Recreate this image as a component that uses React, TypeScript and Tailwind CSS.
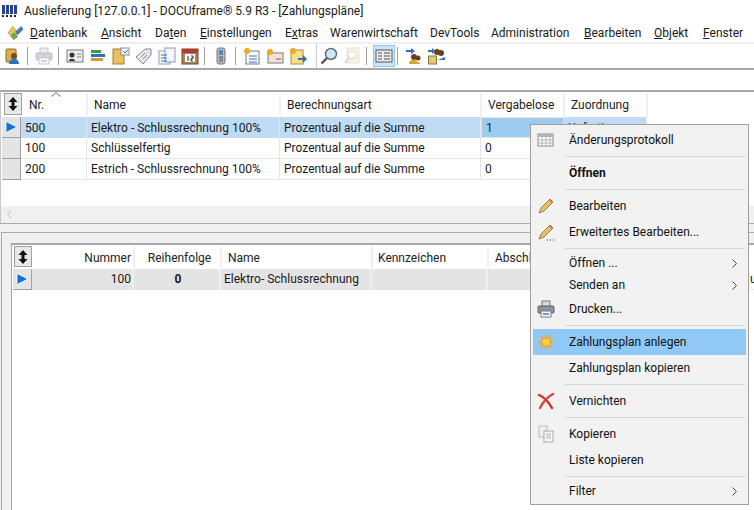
import type { ReactNode } from "react";

const font = { fontFamily: 'Roboto, "Noto Sans", sans-serif' };

function Sep() {
  return <span className="ml-[5px] mr-[7px] h-[18px] w-px shrink-0 bg-[#a0a0a0]" />;
}

function Glyph({ children, className = "" }: { children: ReactNode; className?: string }) {
  return (
    <svg viewBox="0 0 18 18" className={`h-[18px] w-[18px] shrink-0 ${className}`}>
      {children}
    </svg>
  );
}

function UsersFolder() {
  return (
    <Glyph>
      <rect x="2" y="2" width="10" height="13" rx="1" fill="#d9b04a" stroke="#8a6a20" />
      <circle cx="10" cy="9" r="3" fill="#7a4a28" />
      <path d="M5 17c0-4 3-5 5-5s5 1 5 5z" fill="#2f6fc4" />
    </Glyph>
  );
}

function Printer({ faded }: { faded?: boolean }) {
  return (
    <Glyph className={faded ? "opacity-40" : ""}>
      <rect x="5" y="1" width="8" height="6" fill="#d8d8d8" stroke="#777" />
      <rect x="1" y="6" width="16" height="7" rx="1" fill="#8d949b" stroke="#5d646b" />
      <rect x="4" y="11" width="10" height="6" fill="#fff" stroke="#777" />
      <rect x="6" y="13" width="6" height="2" fill="#5aa0dc" />
    </Glyph>
  );
}

function Arrow() {
  return (
    <svg viewBox="0 0 14 14" className="h-[14px] w-[14px]">
      <path d="M2 1.5 L13 7 L2 12.5 Z" fill="#0f74d8" stroke="#fff" strokeWidth="0.8" />
    </svg>
  );
}

function SortIcon() {
  return (
    <svg viewBox="0 0 12 16" className="h-[16px] w-[12px]">
      <path d="M6 1 L10.5 6 H7.5 V10 H10.5 L6 15 L1.5 10 H4.5 V6 H1.5 Z" fill="#111" />
    </svg>
  );
}

function Chevron({ className = "" }: { className?: string }) {
  return (
    <svg viewBox="0 0 5 9" className={`h-[9px] w-[5px] ${className}`}>
      <path d="M0.5 0.5 L4.5 4.5 L0.5 8.5" fill="none" stroke="#444" />
    </svg>
  );
}

function Head({ w, children, className = "px-[6px]" }: { w: string; children?: ReactNode; className?: string }) {
  return (
    <div className={`${w} flex h-full shrink-0 items-center border-r-2 border-[#f0f0f0] ${className}`}>
      {children}
    </div>
  );
}

function Cell({ w, children, className = "" }: { w: string; children?: ReactNode; className?: string }) {
  return (
    <div className={`${w} flex h-full shrink-0 items-center overflow-hidden whitespace-nowrap border-r border-[#e4e4e4] pl-[4px] ${className}`}>
      {children}
    </div>
  );
}

function Selector({ active }: { active?: boolean }) {
  return (
    <div className="flex h-full w-[19px] shrink-0 items-center justify-center border-b border-r border-[#a0a0a0] bg-[#e4e4e4]">
      {active && <Arrow />}
    </div>
  );
}

const rows = [
  { nr: "500", name: "Elektro - Schlussrechnung 100%", art: "Prozentual auf die Summe", verg: "1", active: true },
  { nr: "100", name: "Schlüsselfertig", art: "Prozentual auf die Summe", verg: "0" },
  { nr: "200", name: "Estrich - Schlussrechnung 100%", art: "Prozentual auf die Summe", verg: "0" },
];

const menus = [
  { pre: "", key: "D", post: "atenbank", w: "w-[71px]" },
  { pre: "", key: "A", post: "nsicht", w: "w-[54px]" },
  { pre: "Da", key: "t", post: "en", w: "w-[45px]" },
  { pre: "", key: "E", post: "instellungen", w: "w-[85px]" },
  { pre: "E", key: "x", post: "tras", w: "w-[45px]" },
  { pre: "Warenwirtschaft", key: "", post: "", w: "w-[100px]" },
  { pre: "DevTools", key: "", post: "", w: "w-[61px]" },
  { pre: "Administration", key: "", post: "", w: "w-[93px]" },
  { pre: "", key: "B", post: "earbeiten", w: "w-[70px]" },
  { pre: "", key: "O", post: "bjekt", w: "w-[49px]" },
  { pre: "", key: "F", post: "enster", w: "w-[45px]" },
];

function MenuItem({ icon, label, bold, sub, hover, short }: { icon?: ReactNode; label: string; bold?: boolean; sub?: boolean; hover?: boolean; short?: boolean }) {
  return (
    <div className={`flex items-center ${short ? "h-[22px]" : "h-[26px]"} ${hover ? "bg-[#90c8f6]" : ""}`}>
      <div className="flex w-[26px] shrink-0 justify-center">{icon}</div>
      <span className={`ml-[10px] flex-1 ${bold ? "font-bold" : ""}`}>{label}</span>
      {sub && <Chevron className="mr-[9px]" />}
    </div>
  );
}

function MenuSep() {
  return <div className="my-[3px] ml-[32px] mr-[1px] h-px bg-[#d4d4d4]" />;
}

function Pencil({ dots }: { dots?: boolean }) {
  return (
    <Glyph>
      <path d="M2 16 L4 11 L13 2 L16 5 L7 14 Z" fill="#e8c060" stroke="#7a6a40" strokeWidth="0.8" />
      <path d="M13 2 L16 5 L15 6 L12 3 Z" fill="#d86060" />
      {dots && <path d="M10 17h1M13 17h1M16 17h1" stroke="#222" />}
    </Glyph>
  );
}

function ContextMenu() {
  return (
    <div className="absolute left-[530px] top-[124px] w-[219px] border border-[#a0a0a0] bg-[#f2f2f2] px-[2px] py-[2px] text-[12px] text-[#111]">
      <MenuItem
        label="Änderungsprotokoll"
        icon={
          <Glyph>
            <rect x="1" y="3" width="15" height="12" fill="#fff" stroke="#8a8a8a" />
            <rect x="1" y="3" width="15" height="3" fill="#b0b4bc" />
            <path d="M1 9h15M1 12h15M5 6v9M9 6v9M13 6v9" stroke="#b0b4bc" />
          </Glyph>
        }
      />
      <MenuSep />
      <MenuItem label="Öffnen" bold />
      <MenuSep />
      <MenuItem label="Bearbeiten" icon={<Pencil />} />
      <MenuItem label="Erweitertes Bearbeiten..." icon={<Pencil dots />} />
      <MenuSep />
      <MenuItem label="Öffnen ..." sub short />
      <MenuItem label="Senden an" sub short />
      <MenuItem label="Drucken..." icon={<Printer />} />
      <MenuSep />
      <MenuItem
        label="Zahlungsplan anlegen"
        hover
        icon={
          <Glyph>
            <path d="M9 0 L10.5 5 L15 2.5 L12.8 7 L18 9 L12.8 11 L15 15.5 L10.5 13 L9 18 L7.5 13 L3 15.5 L5.2 11 L0 9 L5.2 7 L3 2.5 L7.5 5 Z" fill="#f5a623" />
            <circle cx="9" cy="9" r="3.5" fill="#ffd24a" />
          </Glyph>
        }
      />
      <MenuItem label="Zahlungsplan kopieren" />
      <MenuSep />
      <MenuItem
        label="Vernichten"
        icon={
          <Glyph>
            <path d="M2 3 C7 5 11 9 15 16" fill="none" stroke="#c8322c" strokeWidth="2.4" strokeLinecap="round" />
            <path d="M16 2 C10 5 6 10 3 16" fill="none" stroke="#d8453e" strokeWidth="2.4" strokeLinecap="round" />
          </Glyph>
        }
      />
      <MenuSep />
      <MenuItem
        label="Kopieren"
        icon={
          <Glyph className="opacity-60">
            <rect x="2" y="1" width="8" height="11" fill="#eee" stroke="#999" />
            <rect x="7" y="6" width="9" height="11" fill="#fff" stroke="#777" />
            <path d="M9 9h5M9 11h5M9 13h5" stroke="#7a8ea8" />
          </Glyph>
        }
      />
      <MenuItem label="Liste kopieren" />
      <MenuSep />
      <MenuItem label="Filter" sub short />
    </div>
  );
}

export default function App() {
  return (
    <div className="relative h-[510px] w-[754px] overflow-hidden bg-white text-[12px] leading-none text-[#1a1a1a]" style={font}>
      {/* title */}
      <div className="flex h-[22px] items-center pl-[2px]">
        <svg viewBox="0 0 16 12" className="h-[12px] w-[16px]">
          <path d="M0 0h3v9H0zM4 0h3v9H4zM8 0h3v9H8zM12 0h3v9h-3z" fill="#24408e" />
          <path d="M0 10h2v2H0zM4 10h2v2H4zM8 10h2v2H8zM12 10h2v2h-2z" fill="#222" />
        </svg>
        <span className="ml-[6px]">Auslieferung [127.0.0.1] - DOCUframe® 5.9 R3 - [Zahlungspläne]</span>
      </div>

      {/* menu */}
      <div className="flex h-[20px] items-center pl-[7px] pt-[1px]">
        <svg viewBox="0 0 18 16" className="h-[16px] w-[17px]">
          <path d="M1 8 L6 1 L10 5 L5 11 Z" fill="#e8c74a" stroke="#9a8a30" strokeWidth="0.6" />
          <path d="M9 7 L15 1 L17 4 L11 10 Z" fill="#4a7ac4" stroke="#2a4a8a" strokeWidth="0.6" />
          <path d="M4 11 L8 8 L11 12 L7 15 Z" fill="#6fae4a" stroke="#3a6a2a" strokeWidth="0.6" />
        </svg>
        <div className="ml-[6px] flex items-center">
          {menus.map((m) => (
            <span key={m.pre + m.key + m.post} className={`${m.w} block whitespace-nowrap`}>
              {m.pre}
              {m.key && <span className="underline">{m.key}</span>}
              {m.post}
            </span>
          ))}
        </div>
      </div>

      {/* toolbar */}
      <div className="flex h-[28px] items-center border-b-2 border-t-2 border-b-[#a8a8a8] border-t-[#f0f0f0] pl-[4px]">
        <UsersFolder />
        <Sep />
        <Printer faded />
        <Sep />
        <div className="flex items-center gap-[5px]">
          <Glyph>
            <rect x="1" y="3" width="16" height="12" fill="#eee" stroke="#777" />
            <circle cx="6" cy="8" r="2.5" fill="#333" />
            <path d="M3 14c0-3 6-3 6 0z" fill="#333" />
            <path d="M11 7h4M11 10h4" stroke="#888" />
          </Glyph>
          <Glyph>
            <rect x="2" y="3" width="10" height="3" fill="#3f9a46" />
            <rect x="2" y="7" width="14" height="3" fill="#2d6fc4" />
            <rect x="2" y="11" width="12" height="3" fill="#d69a2e" />
          </Glyph>
          <Glyph>
            <rect x="1" y="2" width="11" height="15" fill="#e8c060" stroke="#a08030" />
            <rect x="9" y="1" width="8" height="7" fill="#fff" stroke="#7a8ea8" />
            <path d="M11 4l2 2 3-3" stroke="#2d6fc4" fill="none" />
          </Glyph>
          <Glyph>
            <path d="M1 10 L10 2 L16 2 L16 8 L8 17 Z" fill="#e4e8ee" stroke="#888" />
            <path d="M6 10l4-4M8 12l4-4" stroke="#888" />
          </Glyph>
          <Glyph>
            <rect x="1" y="4" width="11" height="13" fill="#fff" stroke="#8a9ab0" />
            <rect x="7" y="1" width="10" height="14" fill="#f4f6fa" stroke="#8a9ab0" />
            <path d="M3 8h6M3 11h6M3 14h6" stroke="#2d6fc4" />
          </Glyph>
          <Glyph>
            <rect x="1" y="2" width="16" height="15" fill="#a8855a" stroke="#6a4a2a" />
            <rect x="1" y="2" width="16" height="4" fill="#b23a34" />
            <rect x="4" y="7" width="10" height="8" fill="#fff" />
            <path d="M7 9v5M10 9h2v2.5h-2v2.5h2" stroke="#222" fill="none" />
          </Glyph>
        </div>
        <Sep />
        <Glyph>
          <rect x="5" y="1" width="8" height="16" rx="2" fill="#b8bcc2" stroke="#777" />
          <rect x="7" y="3" width="4" height="5" fill="#4a8ad4" />
          <path d="M7 10h4M7 12h4M7 14h4" stroke="#555" />
        </Glyph>
        <Sep />
        <div className="flex items-center gap-[5px]">
          <Glyph>
            <rect x="3" y="4" width="13" height="13" fill="#fff" stroke="#778" />
            <path d="M6 9h8M6 12h8M6 15h8" stroke="#2d6fc4" />
            <circle cx="4" cy="4" r="3" fill="#f5a623" />
          </Glyph>
          <Glyph>
            <rect x="2" y="6" width="15" height="10" fill="#ece6da" stroke="#777" />
            <path d="M10 12h5" stroke="#c03a34" />
            <circle cx="4" cy="5" r="3" fill="#f5a623" />
          </Glyph>
          <Glyph>
            <rect x="2" y="3" width="12" height="14" fill="#f6df8a" stroke="#a89040" />
            <circle cx="4" cy="4" r="3" fill="#f5a623" />
            <path d="M9 11h5V8l4 4-4 4v-3H9z" fill="#2d6fc4" />
          </Glyph>
        </div>
        <span className="ml-[9px] mr-[3px] h-[26px] w-px shrink-0 bg-[#c8c8c8]" />
        <div className="flex items-center gap-[5px]">
          <Glyph>
            <circle cx="11" cy="7" r="5.5" fill="#cfe6f8" stroke="#5f6f7f" strokeWidth="1.5" />
            <path d="M7 11 L1.5 16.5" stroke="#555" strokeWidth="2.4" />
          </Glyph>
          <Glyph className="opacity-40">
            <rect x="4" y="1" width="12" height="15" fill="#f3e2b8" stroke="#c8b890" />
            <circle cx="9" cy="8" r="4" fill="#fff" stroke="#999" />
            <path d="M6 11 L2 16" stroke="#999" strokeWidth="2" />
          </Glyph>
        </div>
        <span className="ml-[5px] mr-[6px] h-[18px] w-px shrink-0 bg-[#a0a0a0]" />
        <div className="flex h-[22px] w-[22px] items-center justify-center border border-[#90c8f6] bg-[#cce4f8]">
          <Glyph>
            <rect x="1" y="3" width="16" height="12" fill="#ececec" stroke="#555" />
            <path d="M3 6h4M9 6h6M3 9h4M9 9h6M3 12h4M9 12h6" stroke="#555" />
          </Glyph>
        </div>
        <span className="ml-[2px] mr-[7px] h-[18px] w-px shrink-0 bg-[#a0a0a0]" />
        <div className="flex items-center gap-[5px]">
          <Glyph>
            <path d="M1 3h5V1l4 3-4 3V5H1z" fill="#2d6fc4" />
            <circle cx="9" cy="10" r="3" fill="#6a3f22" />
            <circle cx="13" cy="11" r="2.5" fill="#6a3f22" />
            <path d="M4 17c0-4 4-5 6-4l6 4z" fill="#d6a72e" />
          </Glyph>
          <Glyph>
            <rect x="0.5" y="9" width="8" height="8" fill="#e0c878" stroke="#8a7a40" />
            <path d="M0 3h4V1l3 3-3 3V5H0z" fill="#2d6fc4" />
            <circle cx="9" cy="5" r="3" fill="#6a3f22" />
            <circle cx="13" cy="6" r="3" fill="#6a3f22" />
            <path d="M10 13l7-3v3z" fill="#2d6fc4" />
          </Glyph>
        </div>
      </div>

      {/* filter row */}
      <div className="h-[20px] bg-white" />

      {/* top grid */}
      <div className="relative flex h-[134px] flex-col border-b border-l border-t-2 border-b-[#a8a8a8] border-l-[#c8c8c8] border-t-[#a8a8a8] bg-white">
        <svg viewBox="0 0 10 5" className="absolute left-[50px] top-[0px] h-[5px] w-[10px]">
          <path d="M0.5 4.5 L5 0.5 L9.5 4.5" fill="none" stroke="#666" />
        </svg>
        <div className="flex h-[25px] pl-[3px] pt-[1px] text-[#222]">
          <div className="flex h-[22px] w-[18px] shrink-0 items-center justify-center border border-[#a0a0a0] bg-[#e8e8e8]">
            <SortIcon />
          </div>
          <Head w="w-[66px]">
            <span className="ml-[1px]">Nr.</span>
          </Head>
          <Head w="w-[193px]">Name</Head>
          <Head w="w-[201px]">Berechnungsart</Head>
          <Head w="w-[83px]">Vergabelose</Head>
          <Head w="w-[83px]">Zuordnung</Head>
        </div>
        {rows.map((r) => (
          <div key={r.nr} className="flex h-[21px] pl-[1px]">
            <Selector active={r.active} />
            <div className={`flex h-full ${r.active ? "bg-[#bfdcf4]" : "border-b border-[#e4e4e4]"}`}>
              <Cell w="w-[66px]">{r.nr}</Cell>
              <Cell w="w-[193px]">{r.name}</Cell>
              <Cell w="w-[201px]">{r.art}</Cell>
              <Cell w="w-[83px]" className={r.active ? "border border-[#0f74d8] bg-[#9ccbef]" : ""}>
                {r.verg}
              </Cell>
              <Cell w="w-[83px]">{r.active ? "Unfertig" : ""}</Cell>
            </div>
          </div>
        ))}
        <div className="flex-1" />
        <div className="flex h-[17px] items-center bg-[#f0f0f0] pl-[6px]">
          <Chevron className="rotate-180 opacity-30" />
        </div>
      </div>

      {/* bottom panel */}
      <div className="h-[286px] bg-[#f0f0f0] pl-[1px] pt-[8px]">
        <div className="h-[278px] border-l border-t border-[#a8a8a8] pl-[9px] pt-[10px]">
          <div className="h-[268px] border-l border-t-2 border-[#a8a8a8] bg-white pl-[1px] pt-[1px]">
            <div className="flex h-[23px] pl-[1px] text-[#222]">
              <div className="flex h-[21px] w-[18px] shrink-0 items-center justify-center border border-[#a0a0a0] bg-[#e8e8e8]">
                <SortIcon />
              </div>
              <Head w="w-[103px]" className="justify-end pr-[2px]">Nummer</Head>
              <Head w="w-[87px]" className="justify-center pl-[4px]">Reihenfolge</Head>
              <Head w="w-[151px]">Name</Head>
              <Head w="w-[116px]" className="pl-[5px]">Kennzeichen</Head>
              <Head w="w-[260px]">Abschlag</Head>
            </div>
            <div className="flex h-[21px]">
              <Selector active />
              <div className="flex h-full flex-1 overflow-hidden border-b border-[#e4e4e4]">
                <div className="flex w-[102px] shrink-0 items-center justify-end border-r-2 border-[#f0f0f0] bg-[#e4e4e4] pr-[1px]">100</div>
                <div className="flex w-[87px] shrink-0 items-center justify-center border-r-2 border-[#f0f0f0] bg-[#e4e4e4] pl-[3px] font-bold">0</div>
                <div className="flex w-[151px] shrink-0 items-center whitespace-nowrap border-r-2 border-[#f0f0f0] bg-[#e4e4e4] pl-[3px]">Elektro- Schlussrechnung</div>
                <div className="w-[116px] shrink-0 border-r-2 border-[#f0f0f0] bg-[#e4e4e4]" />
                <div className="w-[261px] shrink-0 bg-[#e4e4e4]" />
                <div className="flex items-center pl-[1px]">uz</div>
              </div>
            </div>
          </div>
        </div>
      </div>

      <ContextMenu />
    </div>
  );
}
